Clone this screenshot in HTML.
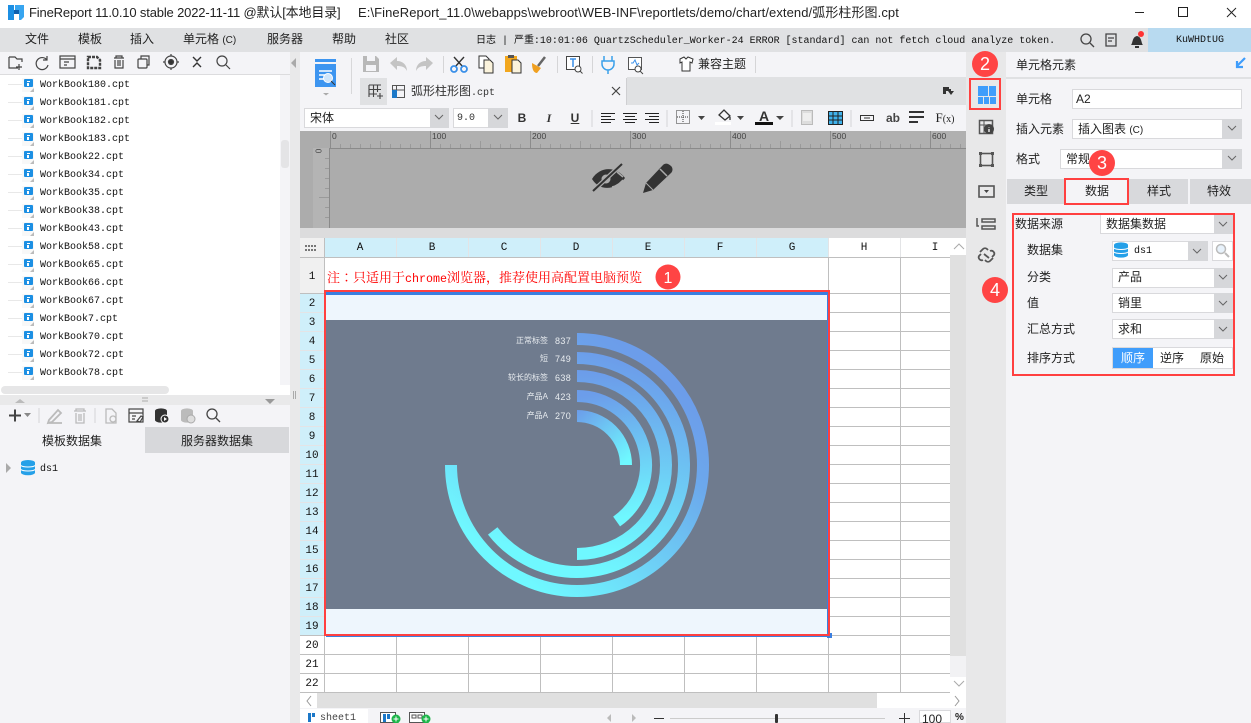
<!DOCTYPE html>
<html><head><meta charset="utf-8">
<style>
html,body{margin:0;padding:0;background:#f4f4f7;}
#p{position:relative;width:1251px;height:723px;overflow:hidden;background:#f4f4f7;font-family:"Liberation Sans","Noto Sans CJK SC",sans-serif;color:#222;font-size:12px;}
.r{position:absolute;}
.t{position:absolute;line-height:16px;white-space:nowrap;}
.m{font-family:"Liberation Mono","Noto Sans CJK SC",monospace;font-size:10px;color:#111;}
.c{transform:translateX(-50%);}
svg{position:absolute;left:0;top:0;}
.sel{position:absolute;background:#fff;border:1px solid #d9d9dc;box-sizing:border-box;}
.arr{position:absolute;background:#d6d7da;}
</style></head><body><div id="p">

<!-- backgrounds -->
<div class="r" style="left:0;top:0;width:1251px;height:28px;background:#fff"></div>
<div class="r" style="left:0;top:28px;width:1251px;height:24px;background:#e0e1e3"></div>
<div class="r" style="left:1148px;top:28px;width:103px;height:24px;background:#b8daf0"></div>
<div class="r" style="left:0;top:74px;width:290px;height:1px;background:#dcdcde"></div>
<div class="r" style="left:0;top:75px;width:280px;height:310px;background:#fff"></div>
<div class="r" style="left:281px;top:140px;width:8px;height:28px;background:#e4e4e6;border-radius:3px"></div>
<div class="r" style="left:0;top:385px;width:290px;height:10px;background:#fff"></div>
<div class="r" style="left:1px;top:386px;width:168px;height:8px;background:#e6e6e7;border-radius:4px"></div>
<div class="r" style="left:0;top:395px;width:290px;height:10px;background:#e9e9ea"></div>
<div class="r" style="left:145px;top:427px;width:144px;height:26px;background:#d7d8db"></div>
<div class="r" style="left:290px;top:52px;width:10px;height:671px;background:#e9e9ea"></div>

<div class="r" style="left:627px;top:77px;width:339px;height:28px;background:#e0e1e3"></div>
<div class="r" style="left:360px;top:78px;width:27px;height:27px;background:#e0e1e3"></div>
<div class="r" style="left:626px;top:78px;width:1px;height:27px;background:#cfcfd2"></div>
<div class="r" style="left:300px;top:131px;width:666px;height:97px;background:#acacac"></div>
<div class="r" style="left:300px;top:228px;width:666px;height:10px;background:#dcdcdd"></div>
<div class="r" style="left:966px;top:52px;width:40px;height:671px;background:#e8e8e9"></div>
<div class="r" style="left:1006px;top:77px;width:245px;height:2px;background:#e0e1e3"></div>

<!-- grid base -->
<div class="r" style="left:300px;top:238px;width:650px;height:454px;background:#fff"></div>
<div class="r" style="left:300px;top:238px;width:24px;height:55px;background:#f0f0f0"></div>
<div class="r" style="left:325px;top:238px;width:503px;height:19px;background:#cfeffa"></div>
<div class="r" style="left:300px;top:293px;width:24px;height:342px;background:#cfeffa"></div>

<svg width="1251" height="723" viewBox="0 0 1251 723">
<!-- grid lines -->
<g stroke="#bfbfbf" stroke-width="1" shape-rendering="crispEdges">
<path d="M324.5 238V692M828.5 238V692M900.5 238V692"/>
<path d="M300 257.5H950M300 293.5H950M300 312.5H950M300 331.5H950M300 350.5H950M300 369.5H950M300 388.5H950M300 407.5H950M300 426.5H950M300 445.5H950M300 464.5H950M300 483.5H950M300 502.5H950M300 521.5H950M300 540.5H950M300 559.5H950M300 578.5H950M300 597.5H950M300 616.5H950M300 635.5H950M300 654.5H950M300 673.5H950M300 692.5H950"/>
<path d="M396.5 635V692M468.5 635V692M540.5 635V692M612.5 635V692M684.5 635V692M756.5 635V692"/>
</g>
<g stroke="#e3e4e6" stroke-width="1" shape-rendering="crispEdges"><path d="M396.5 238V257M468.5 238V257M540.5 238V257M612.5 238V257M684.5 238V257M756.5 238V257M828.5 238V257M900.5 238V257"/></g>
<g stroke="#e4e4e6" stroke-width="1" shape-rendering="crispEdges"><path d="M300 312.5H324M300 331.5H324M300 350.5H324M300 369.5H324M300 388.5H324M300 407.5H324M300 426.5H324M300 445.5H324M300 464.5H324M300 483.5H324M300 502.5H324M300 521.5H324M300 540.5H324M300 559.5H324M300 578.5H324M300 597.5H324M300 616.5H324"/></g>
<!-- corner dots -->
<g fill="#777"><rect x="305" y="245" width="2" height="2"/><rect x="308" y="245" width="2" height="2"/><rect x="311" y="245" width="2" height="2"/><rect x="314" y="245" width="2" height="2"/><rect x="305" y="249" width="2" height="2"/><rect x="308" y="249" width="2" height="2"/><rect x="311" y="249" width="2" height="2"/><rect x="314" y="249" width="2" height="2"/></g>
<!-- chart cell -->
<rect x="326" y="295" width="502" height="339" fill="#eef6fd"/>
<rect x="326" y="320" width="502" height="289" fill="#6f7b8e"/>
<defs>
<linearGradient id="g1" gradientUnits="userSpaceOnUse" x1="690" y1="400" x2="540" y2="590"><stop offset="0" stop-color="#6c9dea"/><stop offset=".25" stop-color="#6ca8ec"/><stop offset="1" stop-color="#6ff8ff"/></linearGradient>
<linearGradient id="g2" gradientUnits="userSpaceOnUse" x1="650" y1="370" x2="590" y2="570"><stop offset="0" stop-color="#6c9dea"/><stop offset="1" stop-color="#6ff8ff"/></linearGradient>
<linearGradient id="g3" gradientUnits="userSpaceOnUse" x1="610" y1="375" x2="600" y2="550"><stop offset="0" stop-color="#6c9dea"/><stop offset="1" stop-color="#6ff8ff"/></linearGradient>
<linearGradient id="g4" gradientUnits="userSpaceOnUse" x1="590" y1="395" x2="610" y2="520"><stop offset="0" stop-color="#6c9dea"/><stop offset="1" stop-color="#6ff8ff"/></linearGradient>
<linearGradient id="g5" gradientUnits="userSpaceOnUse" x1="578" y1="410" x2="624" y2="463"><stop offset="0" stop-color="#6c9dea"/><stop offset="1" stop-color="#6ff8ff"/></linearGradient>
</defs>
<g fill="none" stroke-width="12">
<path d="M577 339A126 126 0 1 1 451 465" stroke="url(#g1)"/>
<path d="M577 358A107 107 0 1 1 492.7 530.9" stroke="url(#g2)"/>
<path d="M577 376A89 89 0 1 1 577 554" stroke="url(#g3)"/>
<path d="M577 396A69 69 0 0 1 616.6 521.5" stroke="url(#g4)"/>
<path d="M577 416A49 49 0 0 1 626 465" stroke="url(#g5)"/>
</g>
<!-- selection -->
<rect x="326" y="292" width="502" height="3" fill="#3a7fe0"/>
<rect x="827" y="293" width="1" height="342" fill="#3a7fe0"/>
<rect x="326" y="635" width="502" height="2" fill="#3a7fe0"/>
<rect x="827" y="633" width="5" height="5" fill="#3a7fe0"/>

<!-- title logo -->
<path d="M8 5h6v15H8z" fill="#1c8fe3"/><path d="M15 5h9v12l-3 3h-2v-9h-4z" fill="#37a5f0"/><path d="M14 10h5v4h-5z" fill="#0d5fae"/>
<!-- window buttons -->
<g fill="none" stroke="#222" stroke-width="1"><path d="M1135 12.5h9"/><rect x="1178.5" y="7.5" width="9" height="9"/><path d="M1227 8l9 9M1236 8l-9 9"/></g>
<!-- top-right icons -->
<g fill="none" stroke="#444" stroke-width="1.3"><circle cx="1086" cy="39" r="5"/><path d="M1090 43l4 4"/><path d="M1106 34h10v12h-10zM1108 38h6M1108 41h4"/></g>
<path d="M1131 45c2-2 1-8 6-9 5 1 4 7 6 9zM1135 46h4v2h-4z" fill="#333"/><circle cx="1141" cy="34" r="3" fill="#f33"/>

<!-- left toolbar -->
<g fill="none" stroke="#444" stroke-width="1.2">
<path d="M9 57h6l2 2h5v3M9 57v11h9M19 64v6M16 67h6"/>
<path d="M47 60a6 6 0 1 0 1 5M47 56v4h-4"/>
<rect x="60" y="56" width="15" height="12"/><path d="M60 59h15M64 62h5M64 65h3"/>
<path d="M88 57h9l3 3v8H88z" stroke-width="2.400" stroke-dasharray="3 1"/>
<path d="M114 58h10M116 58v-2h6v2M115 60v8h8v-8M118 60v6M120 60v6"/>
<rect x="138" y="59" width="9" height="9" rx="1"/><path d="M141 59v-3h8v9h-2"/>
<circle cx="171" cy="62" r="6"/><circle cx="171" cy="62" r="2.5" fill="#333"/><path d="M171 54v2M171 68v2M163 62h2M177 62h2"/>
<path d="M193 57l4 4 4-4M193 67l4-4 4 4" stroke="#333" stroke-width="1.4"/>
<circle cx="222" cy="61" r="5"/><path d="M226 65l4 4"/>
</g>
<!-- tree & file icons -->
<g stroke="#e8e8e8"><path d="M8 84.5h14M8 102.5h14M8 120.5h14M8 138.5h14M8 156.5h14M8 174.5h14M8 192.5h14M8 210.5h14M8 228.5h14M8 246.5h14M8 264.5h14M8 282.5h14M8 300.5h14M8 318.5h14M8 336.5h14M8 354.5h14M8 372.5h14"/></g>
<defs><g id="f"><rect x="0" y="0" width="12" height="14" fill="#f8f8f8"/><rect x="2" y="1" width="9" height="8" rx="1" fill="#1c8fe3"/><rect x="5" y="3" width="3" height="1" fill="#fff"/><rect x="5" y="5" width="2" height="3" fill="#fff"/><path d="M12 10v4h-4z" fill="#bbb"/></g></defs>
<use href="#f" x="22" y="78"/><use href="#f" x="22" y="96"/><use href="#f" x="22" y="114"/><use href="#f" x="22" y="132"/><use href="#f" x="22" y="150"/><use href="#f" x="22" y="168"/><use href="#f" x="22" y="186"/><use href="#f" x="22" y="204"/><use href="#f" x="22" y="222"/><use href="#f" x="22" y="240"/><use href="#f" x="22" y="258"/><use href="#f" x="22" y="276"/><use href="#f" x="22" y="294"/><use href="#f" x="22" y="312"/><use href="#f" x="22" y="330"/><use href="#f" x="22" y="348"/><use href="#f" x="22" y="366"/>
<!-- splitter arrows -->
<path d="M15 403l5-4 5 4z" fill="#bbb"/><path d="M265 399h10l-5 5z" fill="#999"/><path d="M142 398h6M142 401h6" stroke="#aaa"/>
<path d="M296 58l-5 5 5 5z" fill="#aaa"/><path d="M293.500 391v8M295.500 391v8" stroke="#aaa"/>
<!-- data toolbar -->
<path d="M9 415.5h12M15 409.5v12" stroke="#444" stroke-width="2"/><path d="M24 413h7l-3.500 4z" fill="#888"/>
<path d="M39 408v15M95 408v15" stroke="#d5d5d7"/>
<g fill="none" stroke="#bbb" stroke-width="1.3"><path d="M49 420l9-10 3 3-9 9-4 1zM48 423h14" stroke-width="1.8"/><path d="M74 411h12M76 411v-2h8v2M76 413v10h8v-10M79 414v7M81 414v7"/><path d="M106 409h6l4 4v10h-10z"/><circle cx="113" cy="419" r="3"/></g>
<g fill="none" stroke="#444" stroke-width="1.2"><rect x="129" y="409" width="14" height="13"/><path d="M129 413h14M132 416h4M132 419h3M137 421l4-5 2 1-3 5z"/></g>
<ellipse cx="161" cy="411" rx="6" ry="2.600" fill="#333"/><rect x="155" y="411" width="12" height="9" fill="#333"/><ellipse cx="161" cy="420" rx="6" ry="2.600" fill="#333"/><circle cx="165" cy="419" r="4" fill="#333" stroke="#fff"/><path d="M164 417l3 2-3 2z" fill="#fff"/>
<ellipse cx="187" cy="411" rx="6" ry="2.600" fill="#bbb"/><rect x="181" y="411" width="12" height="9" fill="#bbb"/><ellipse cx="187" cy="420" rx="6" ry="2.600" fill="#bbb"/><circle cx="191" cy="419" r="4" fill="#ddd" stroke="#aaa"/>
<g fill="none" stroke="#444" stroke-width="1.3"><circle cx="212" cy="414" r="5"/><path d="M216 418l4 4"/></g>
<!-- ds1 -->
<path d="M6 463l5 5-5 5z" fill="#aaa"/>
<defs><g id="d"><ellipse cx="7" cy="2.600" rx="7" ry="2.600" fill="#25a0e8"/><rect x="0" y="2.600" width="14" height="10" fill="#25a0e8"/><ellipse cx="7" cy="12.600" rx="7" ry="2.600" fill="#25a0e8"/><path d="M0 5.500c2 2 12 2 14 0M0 9.500c2 2 12 2 14 0" stroke="#fff" fill="none"/></g></defs>
<use href="#d" x="21" y="460"/>

<!-- big preview icon -->
<rect x="315" y="59" width="21" height="3" fill="#3d95f0"/>
<path d="M315 64h21v23h-21z" fill="#3d95f0"/><path d="M319 71h13M319 75h6M319 79h5" stroke="#fff" stroke-width="1.400"/><circle cx="328" cy="78" r="4.500" fill="#cfe5fb" stroke="#fff"/><path d="M331 81l4 4" stroke="#333"/>
<path d="M323 93h6l-3 2.500z" fill="#aaa"/>
<path d="M351.500 58v36" stroke="#d8d8da"/>
<!-- top toolbar -->
<path d="M363 56h13l3 3v13h-16z" fill="#b8b8b8"/><rect x="367" y="56" width="8" height="5" fill="#f4f4f7"/><rect x="366" y="65" width="10" height="6" fill="#f4f4f7"/>
<path d="M390 63l7-6v4c6 0 10 4 10 10-2-4-5-5-10-5v4z" fill="#c4c4c4"/>
<path d="M433 63l-7-6v4c-6 0-10 4-10 10 2-4 5-5 10-5v4z" fill="#c4c4c4"/>
<path d="M443.500 56v17M557.500 56v17M592.500 56v17M755.500 56v17" stroke="#d5d5d7"/>
<g fill="none" stroke="#333" stroke-width="1.4"><path d="M454 57l9 10M464 57l-9 10"/></g><g fill="none" stroke="#3a8fe8" stroke-width="1.800"><circle cx="454" cy="69" r="3"/><circle cx="464" cy="69" r="3"/></g>
<g stroke="#333" stroke-width="1"><path d="M479 56h7l3 3v9h-10z" fill="#fff"/><path d="M484 60h6l3 3v10h-9z" fill="#fbf3dc"/></g>
<path d="M505 56h12v16h-12z" fill="#f2a71e"/><rect x="508" y="55" width="6" height="3" fill="#555"/><path d="M512 60h6l3 3v10h-9z" fill="#fbf3dc" stroke="#333"/>
<path d="M532 63l9 5-4 5c-3 0-5-3-5-10z" fill="#f0a020"/><path d="M538 66l7-9" stroke="#666" stroke-width="2.500"/>
<rect x="566.500" y="56.500" width="13" height="13" fill="#fff" stroke="#444"/><path d="M570 59h6M573 59v8" stroke="#3a8fe8" stroke-width="1.500" fill="none"/><circle cx="578" cy="69" r="3" fill="#fff" stroke="#444"/><path d="M580 71l2.500 2.500" stroke="#444"/>
<path d="M604 56v5M612 56v5M602 61h12v3a6 6 0 0 1-12 0zM608 70v4" stroke="#3aa0ea" stroke-width="1.500" fill="none"/>
<rect x="628.500" y="57.500" width="13" height="12" fill="#fff" stroke="#555"/><path d="M631 63h2l2-3 2 5 2-2" stroke="#3a8fe8" fill="none"/><circle cx="638" cy="69" r="3" fill="#fff" stroke="#444"/><path d="M640 71l3 3" stroke="#444"/>
<path d="M680 59l4-2 2 2 2-2 5 2-1 4-2-1v9h-8v-9l-2 1z" fill="#fff" stroke="#333"/>
<!-- tab -->
<g fill="none" stroke="#444" stroke-width="1.100"><path d="M369 85h12M369 89.500h12M369 94h8M369 85v12M373.500 85v12M377.500 85v7M380 93v6M377 96h6"/></g>
<rect x="392.500" y="85.500" width="12" height="12" fill="none" stroke="#555"/><path d="M396.500 85v13M392 90h13" stroke="#555"/><path d="M392 90h5v8h-5z" fill="#1c78c8"/><path d="M612 87l8 8M620 87l-8 8" stroke="#444" stroke-width="1.200"/>
<path d="M943 87h6v2h2v2h-5v3h-3zM948 91h6l-3 4z" fill="#333"/>
<!-- format toolbar -->
<path d="M592 110v17M667 110v17M792 110v17M851 110v17" stroke="#d5d5d7" />
<g stroke="#222" stroke-width="1"><path d="M601 113.500h14M601 116.500h10M601 119.500h14M601 122.500h10"/><path d="M623 113.500h14M625 116.500h10M623 119.500h14M625 122.500h10"/><path d="M645 113.500h14M649 116.500h10M645 119.500h14M649 122.500h10"/></g>
<rect x="676.500" y="110.500" width="13" height="13" fill="none" stroke="#333" stroke-dasharray="1 1"/><path d="M683 111v12M677 117h12" stroke="#333" stroke-dasharray="1 1"/>
<path d="M698 116h7l-3.500 4z" fill="#444"/>
<path d="M719 115l5-5 6 6-5 4zM730 117v3" fill="none" stroke="#333" stroke-width="1.300"/><rect x="715" y="122" width="16" height="3" fill="#fff"/>
<path d="M737 116h7l-3.500 4z" fill="#444"/>
<rect x="755" y="122" width="18" height="3" fill="#111"/>
<path d="M776 116h8l-4 4z" fill="#444"/>
<rect x="801.500" y="110.500" width="11" height="14" fill="#ddd" stroke="#bbb"/><rect x="803" y="113" width="8" height="8" fill="#eee"/>
<rect x="828.500" y="111.500" width="14" height="13" fill="#3fb2ec" stroke="#222"/><path d="M828 116h15M828 120h15M833 111v14M838 111v14" stroke="#222"/>
<rect x="860.500" y="115.500" width="13" height="5" fill="none" stroke="#333"/><path d="M864 118h6" stroke="#333"/>
<path d="M909 112h15M909 117h15M909 122h9" stroke="#333" stroke-width="2"/>
<!-- ruler -->
<rect x="330" y="148" width="636" height="1" fill="#8a8a8a"/><rect x="313" y="148" width="17" height="80" fill="#b4b4b4"/><rect x="330" y="131" width="636" height="17" fill="#b0b0b0"/>
<path d="M330.500 131v17M430.500 131v17M530.500 131v17M630.500 131v17M730.500 131v17M830.500 131v17M930.500 131v17" stroke="#8c8c8c" stroke-width="1"/>
<path d="M340.500 144v4M350.500 144v4M360.500 144v4M370.500 144v4M380.500 141v7M390.500 144v4M400.500 144v4M410.500 144v4M420.500 144v4M440.500 144v4M450.500 144v4M460.500 144v4M470.500 144v4M480.500 141v7M490.500 144v4M500.500 144v4M510.500 144v4M520.500 144v4M540.500 144v4M550.500 144v4M560.500 144v4M570.500 144v4M580.500 141v7M590.500 144v4M600.500 144v4M610.500 144v4M620.500 144v4M640.500 144v4M650.500 144v4M660.500 144v4M670.500 144v4M680.500 141v7M690.500 144v4M700.500 144v4M710.500 144v4M720.500 144v4M740.500 144v4M750.500 144v4M760.500 144v4M770.500 144v4M780.500 141v7M790.500 144v4M800.500 144v4M810.500 144v4M820.500 144v4M840.500 144v4M850.500 144v4M860.500 144v4M870.500 144v4M880.500 141v7M890.500 144v4M900.500 144v4M910.500 144v4M920.500 144v4M940.500 144v4M950.500 144v4M960.500 144v4" stroke="#9a9a9a"/>
<path d="M325 158.500h4M325 168.500h4M325 178.500h4M319 197.500h10M325 207.500h4M325 217.500h4M325 188.500h4" stroke="#9a9a9a" shape-rendering="crispEdges"/>
<path d="M329.500 148v80" stroke="#8a8a8a"/>
<!-- eye, pencil -->
<path d="M592 179C600 166 616 166 625 178C616 190 600 192 592 179z" fill="#333"/><circle cx="606" cy="179" r="4.500" fill="#acacac"/><path d="M617 172L623 177M612 187C617 186 620 183 623 180" stroke="#acacac" fill="none" stroke-width="1.500"/><path d="M592 192l31-29" stroke="#acacac" stroke-width="4.500"/><path d="M593 191l29-27" stroke="#333" stroke-width="2"/>
<path d="M643 193l3-10 17-18c2-2 5-2 8 1 2 2 2 5 0 7l-18 17z" fill="#333"/><path d="M660 169l7 7" stroke="#acacac" stroke-width="1.500"/><path d="M646 183l7 7" stroke="#acacac" stroke-width="1"/>

<!-- scrollbar v -->
<rect x="950" y="238" width="16" height="17" fill="#fff"/><path d="M954 249l5-5 5 5" stroke="#aaa" fill="none"/>
<rect x="950" y="255" width="16" height="401" fill="#e0e0e0"/>
<rect x="950" y="656" width="16" height="21" fill="#f2f2f4"/>
<rect x="950" y="677" width="16" height="16" fill="#fff"/><path d="M954 681l5 5 5-5" stroke="#aaa" fill="none"/>
<!-- scrollbar h -->
<rect x="300" y="693" width="666" height="15" fill="#fff"/>
<rect x="317" y="693" width="560" height="15" fill="#e0e0e0"/>
<path d="M311 696l-4 5 4 5M955 696l4 5-4 5" fill="none" stroke="#999"/>
<!-- status -->
<rect x="300" y="708" width="666" height="15" fill="#f4f4f7"/>
<rect x="300" y="709" width="68" height="14" fill="#fff"/>
<path d="M308 713h3v9h-3z" fill="#1c78c8"/><path d="M312 713h3v4h-3z" fill="#1c78c8"/>
<rect x="380.500" y="712.500" width="15" height="10" fill="#fff" stroke="#555"/><path d="M383 714h3v8h-3zM387 714h3v5h-3z" fill="#1c78c8"/><circle cx="396" cy="719" r="4.500" fill="#1eb64a"/><path d="M393.500 719h5M396 716.500v5" stroke="#fff"/>
<rect x="409.500" y="712.500" width="15" height="10" fill="#fff" stroke="#555"/><path d="M412 715h4v3h-4zM418 715h4v3h-4z" fill="none" stroke="#555"/><circle cx="426" cy="719" r="4.500" fill="#1eb64a"/><path d="M423.500 719h5M426 716.500v5" stroke="#fff"/>
<path d="M611 714l-4 4 4 4zM632 714l4 4-4 4z" fill="#bbb"/>
<path d="M654 718.500h10M899 718.500h11M904.500 713v11" stroke="#333"/>
<path d="M670 718.500h215" stroke="#ccc"/><rect x="775" y="714" width="3" height="9" rx="1" fill="#333"/>

<!-- right sidebar icons -->
<rect x="978" y="86" width="10" height="10" fill="#3f9dfb"/><rect x="989" y="86" width="7" height="10" fill="#3f9dfb"/><rect x="978" y="97" width="5" height="7" fill="#3f9dfb"/><rect x="984" y="97" width="5" height="7" fill="#3f9dfb"/><rect x="990" y="97" width="6" height="7" fill="#3f9dfb"/>
<rect x="979.500" y="120.500" width="13" height="13" fill="none" stroke="#555" stroke-width="1.500"/><path d="M979 125h14M984 120v14" stroke="#555"/><circle cx="989" cy="129" r="5" fill="#444"/><path d="M989 127v.5M989 129v3" stroke="#fff" stroke-width="1.300"/>
<rect x="980.500" y="153.500" width="12" height="12" fill="none" stroke="#555" stroke-width="1.600"/><g fill="#555"><rect x="979" y="152" width="3" height="3"/><rect x="991" y="152" width="3" height="3"/><rect x="979" y="164" width="3" height="3"/><rect x="991" y="164" width="3" height="3"/></g>
<rect x="979" y="186" width="15" height="11" fill="none" stroke="#555" stroke-width="1.600"/><path d="M984 190h5l-2.500 3z" fill="#444"/>
<path d="M977 218v8h2M982 219h13v3h-13zM982 226h13v3h-13z" fill="none" stroke="#555" stroke-width="1.500"/>
<path d="M980 252l3-3a3 3 0 0 1 4 0l1 1M993 258l-3 3a3 3 0 0 1-4 0l-1-1M984 254l5 4M990 251a3 3 0 0 1 4 4l-2 2M983 260a3 3 0 0 1-4-4l2-2" fill="none" stroke="#555" stroke-width="1.800"/>
<path d="M1245 58l-8 8M1237 61v6h6" stroke="#3f9dfb" stroke-width="2.200" fill="none"/>
</svg>

<!-- Title text -->
<div class="t" style="left:29px;top:5px;font-size:13px;letter-spacing:-.16px">FineReport 11.0.10 stable 2022-11-11 @默认[本地目录]</div>
<div class="t" style="left:358px;top:5px;font-size:13px;letter-spacing:.08px">E:\FineReport_11.0\webapps\webroot\WEB-INF\reportlets/demo/chart/extend/弧形柱形图.cpt</div>
<!-- Menu -->
<div class="t" style="left:25px;top:31px">文件</div><div class="t" style="left:78px;top:31px">模板</div><div class="t" style="left:130px;top:31px">插入</div><div class="t" style="left:183px;top:31px">单元格 <span style="font-size:10px">(C)</span></div><div class="t" style="left:267px;top:31px">服务器</div><div class="t" style="left:332px;top:31px">帮助</div><div class="t" style="left:385px;top:31px">社区</div>
<div class="t m" style="left:476px;top:34px;letter-spacing:-.01px">日志 | 严重:10:01:06 QuartzScheduler_Worker-24 ERROR [standard] can not fetch cloud analyze token.</div>
<div class="t m" style="left:1175px;top:33px;width:50px;text-align:center">KuWHDtUG</div>

<!-- File list -->
<div class="t m" style="left:40px;top:78px">WorkBook180.cpt</div>
<div class="t m" style="left:40px;top:96px">WorkBook181.cpt</div>
<div class="t m" style="left:40px;top:114px">WorkBook182.cpt</div>
<div class="t m" style="left:40px;top:132px">WorkBook183.cpt</div>
<div class="t m" style="left:40px;top:150px">WorkBook22.cpt</div>
<div class="t m" style="left:40px;top:168px">WorkBook34.cpt</div>
<div class="t m" style="left:40px;top:186px">WorkBook35.cpt</div>
<div class="t m" style="left:40px;top:204px">WorkBook38.cpt</div>
<div class="t m" style="left:40px;top:222px">WorkBook43.cpt</div>
<div class="t m" style="left:40px;top:240px">WorkBook58.cpt</div>
<div class="t m" style="left:40px;top:258px">WorkBook65.cpt</div>
<div class="t m" style="left:40px;top:276px">WorkBook66.cpt</div>
<div class="t m" style="left:40px;top:294px">WorkBook67.cpt</div>
<div class="t m" style="left:40px;top:312px">WorkBook7.cpt</div>
<div class="t m" style="left:40px;top:330px">WorkBook70.cpt</div>
<div class="t m" style="left:40px;top:348px">WorkBook72.cpt</div>
<div class="t m" style="left:40px;top:366px">WorkBook78.cpt</div>

<div class="t" style="left:42px;top:433px">模板数据集</div>
<div class="t" style="left:181px;top:433px">服务器数据集</div>
<div class="t m" style="left:40px;top:462px">ds1</div>

<!-- Center toolbar -->
<div class="t" style="left:698px;top:56px">兼容主题</div>
<div class="t" style="left:411px;top:84px;font-family:'Liberation Mono','Noto Sans CJK SC',monospace;font-size:12px;color:#333">弧形柱形图<span style="font-size:10px">.cpt</span></div>

<div class="sel" style="left:304px;top:108px;width:145px;height:20px;"></div><div class="arr" style="left:430px;top:108px;width:19px;height:20px"></div>
<div class="t" style="left:310px;top:110px">宋体</div>
<div class="sel" style="left:453px;top:108px;width:55px;height:20px;"></div><div class="arr" style="left:488px;top:108px;width:20px;height:20px"></div>
<div class="t m" style="left:457px;top:111px;color:#333">9.0</div>
<svg width="1251" height="723" style="pointer-events:none"><path d="M435 115l4 4 4-4M494 115l4 4 4-4" fill="none" stroke="#666"/></svg>
<div class="t c" style="left:522px;top:110px;font-weight:bold;color:#333">B</div>
<div class="t c" style="left:549px;top:110px;font-weight:bold;font-style:italic;color:#333;font-family:'Liberation Serif'">I</div>
<div class="t c" style="left:575px;top:110px;font-weight:bold;color:#333;text-decoration:underline">U</div>
<div class="t c" style="left:764px;top:108px;font-weight:bold;font-size:14px;color:#333">A</div>
<div class="t c" style="left:893px;top:110px;font-weight:bold;color:#444;font-size:12px">ab</div>
<div class="t c" style="left:945px;top:110px;font-family:'Liberation Serif';font-size:13px;color:#222">F<span style="font-size:10px">(x)</span></div>

<!-- Ruler numbers -->
<div class="t" style="left:332px;top:130px;font-size:8.500px;color:#444;line-height:12px">0</div>
<div class="t" style="left:432px;top:130px;font-size:8.500px;color:#444;line-height:12px">100</div>
<div class="t" style="left:532px;top:130px;font-size:8.500px;color:#444;line-height:12px">200</div>
<div class="t" style="left:632px;top:130px;font-size:8.500px;color:#444;line-height:12px">300</div>
<div class="t" style="left:732px;top:130px;font-size:8.500px;color:#444;line-height:12px">400</div>
<div class="t" style="left:832px;top:130px;font-size:8.500px;color:#444;line-height:12px">500</div>
<div class="t" style="left:932px;top:130px;font-size:8.500px;color:#444;line-height:12px">600</div>
<div class="t" style="left:316px;top:145px;font-size:8.500px;color:#444;line-height:12px;transform:rotate(90deg)">0</div>

<!-- Column heads -->
<div class="t m c" style="left:360px;top:240px;font-size:11px">A</div>
<div class="t m c" style="left:432px;top:240px;font-size:11px">B</div>
<div class="t m c" style="left:504px;top:240px;font-size:11px">C</div>
<div class="t m c" style="left:576px;top:240px;font-size:11px">D</div>
<div class="t m c" style="left:648px;top:240px;font-size:11px">E</div>
<div class="t m c" style="left:720px;top:240px;font-size:11px">F</div>
<div class="t m c" style="left:792px;top:240px;font-size:11px">G</div>
<div class="t m c" style="left:864px;top:240px;font-size:11px">H</div>
<div class="t m c" style="left:935px;top:240px;font-size:11px">I</div>
<!-- Row heads -->
<div class="t m c" style="left:312px;top:269px;font-size:11px">1</div>
<div class="t m c" style="left:312px;top:296px;font-size:11px">2</div>
<div class="t m c" style="left:312px;top:315px;font-size:11px">3</div>
<div class="t m c" style="left:312px;top:334px;font-size:11px">4</div>
<div class="t m c" style="left:312px;top:353px;font-size:11px">5</div>
<div class="t m c" style="left:312px;top:372px;font-size:11px">6</div>
<div class="t m c" style="left:312px;top:391px;font-size:11px">7</div>
<div class="t m c" style="left:312px;top:410px;font-size:11px">8</div>
<div class="t m c" style="left:312px;top:429px;font-size:11px">9</div>
<div class="t m c" style="left:312px;top:448px;font-size:11px">10</div>
<div class="t m c" style="left:312px;top:467px;font-size:11px">11</div>
<div class="t m c" style="left:312px;top:486px;font-size:11px">12</div>
<div class="t m c" style="left:312px;top:505px;font-size:11px">13</div>
<div class="t m c" style="left:312px;top:524px;font-size:11px">14</div>
<div class="t m c" style="left:312px;top:543px;font-size:11px">15</div>
<div class="t m c" style="left:312px;top:562px;font-size:11px">16</div>
<div class="t m c" style="left:312px;top:581px;font-size:11px">17</div>
<div class="t m c" style="left:312px;top:600px;font-size:11px">18</div>
<div class="t m c" style="left:312px;top:619px;font-size:11px">19</div>
<div class="t m c" style="left:312px;top:638px;font-size:11px">20</div>
<div class="t m c" style="left:312px;top:657px;font-size:11px">21</div>
<div class="t m c" style="left:312px;top:676px;font-size:11px">22</div>

<!-- red note -->
<div class="t" style="left:327px;top:269px;color:#f00;font-size:13px;font-family:'Liberation Mono','Noto Serif CJK SC',serif">注<span style="font-family:'Noto Serif CJK TC',serif">：</span>只适用于<span style="font-size:11.670px">chrome</span>浏览器，推荐使用高配置电脑预览</div>

<!-- chart labels -->
<div class="t" style="right:703px;top:333px;font-size:8px;color:#e8ecf0">正常标签</div><div class="t" style="left:555px;top:333px;font-size:9px;color:#e8ecf0;letter-spacing:.4px">837</div>
<div class="t" style="right:703px;top:351px;font-size:8px;color:#e8ecf0">短</div><div class="t" style="left:555px;top:351px;font-size:9px;color:#e8ecf0;letter-spacing:.4px">749</div>
<div class="t" style="right:703px;top:370px;font-size:8px;color:#e8ecf0">较长的标签</div><div class="t" style="left:555px;top:370px;font-size:9px;color:#e8ecf0;letter-spacing:.4px">638</div>
<div class="t" style="right:703px;top:389px;font-size:8px;color:#e8ecf0">产品A</div><div class="t" style="left:555px;top:389px;font-size:9px;color:#e8ecf0;letter-spacing:.4px">423</div>
<div class="t" style="right:703px;top:408px;font-size:8px;color:#e8ecf0">产品A</div><div class="t" style="left:555px;top:408px;font-size:9px;color:#e8ecf0;letter-spacing:.4px">270</div>

<!-- status text -->
<div class="t m" style="left:320px;top:711px;color:#444">sheet1</div>
<div class="sel" style="left:919px;top:710px;width:32px;height:13px;"></div>
<div class="t" style="left:922px;top:711px;color:#222">100</div>
<div class="t" style="left:955px;top:710px;font-size:10px;font-weight:bold;color:#222">%</div>

<!-- Right panel -->
<div class="t" style="left:1016px;top:57px">单元格元素</div>
<div class="t" style="left:1016px;top:91px">单元格</div>
<div class="sel" style="left:1072px;top:89px;width:170px;height:20px;"></div>
<div class="t" style="left:1076px;top:91px;color:#222">A2</div>
<div class="t" style="left:1016px;top:121px">插入元素</div>
<div class="sel" style="left:1072px;top:119px;width:170px;height:20px;"></div><div class="arr" style="left:1222px;top:119px;width:20px;height:20px"></div>
<div class="t" style="left:1078px;top:121px">插入图表 <span style="font-size:10px">(C)</span></div>
<div class="t" style="left:1016px;top:151px">格式</div>
<div class="sel" style="left:1060px;top:149px;width:182px;height:20px;"></div><div class="arr" style="left:1222px;top:149px;width:20px;height:20px"></div>
<div class="t" style="left:1066px;top:151px">常规</div>

<div class="r" style="left:1007px;top:179px;width:57px;height:25px;background:#d8d9dc"></div>
<div class="r" style="left:1129px;top:179px;width:59px;height:25px;background:#d8d9dc"></div>
<div class="r" style="left:1190px;top:179px;width:61px;height:25px;background:#d8d9dc"></div>
<div class="t c" style="left:1036px;top:183px">类型</div>
<div class="t c" style="left:1097px;top:183px">数据</div>
<div class="t c" style="left:1159px;top:183px">样式</div>
<div class="t c" style="left:1219px;top:183px">特效</div>

<div class="t" style="left:1015px;top:216px">数据来源</div>
<div class="sel" style="left:1100px;top:214px;width:133px;height:20px;"></div><div class="arr" style="left:1214px;top:214px;width:19px;height:20px"></div>
<div class="t" style="left:1106px;top:216px">数据集数据</div>

<div class="t" style="left:1027px;top:242px">数据集</div>
<div class="sel" style="left:1112px;top:241px;width:96px;height:20px;"></div><div class="arr" style="left:1188px;top:241px;width:20px;height:20px"></div>
<div class="t m" style="left:1134px;top:244px">ds1</div>
<div class="sel" style="left:1212px;top:241px;width:21px;height:20px;"></div>

<div class="t" style="left:1027px;top:269px">分类</div>
<div class="sel" style="left:1112px;top:268px;width:121px;height:20px;"></div><div class="arr" style="left:1214px;top:268px;width:19px;height:20px"></div>
<div class="t" style="left:1118px;top:269px">产品</div>

<div class="t" style="left:1027px;top:295px">值</div>
<div class="sel" style="left:1112px;top:293px;width:121px;height:20px;"></div><div class="arr" style="left:1214px;top:293px;width:19px;height:20px"></div>
<div class="t" style="left:1118px;top:295px">销里</div>

<div class="t" style="left:1027px;top:321px">汇总方式</div>
<div class="sel" style="left:1112px;top:319px;width:121px;height:20px;"></div><div class="arr" style="left:1214px;top:319px;width:19px;height:20px"></div>
<div class="t" style="left:1118px;top:321px">求和</div>

<div class="t" style="left:1027px;top:350px">排序方式</div>
<div class="sel" style="left:1112px;top:347px;width:121px;height:22px;"></div>
<div class="r" style="left:1113px;top:348px;width:40px;height:20px;background:#3f9dfb"></div>
<div class="t c" style="left:1133px;top:350px;color:#fff">顺序</div>
<div class="t c" style="left:1172px;top:350px">逆序</div>
<div class="t c" style="left:1212px;top:350px">原始</div>

<svg width="1251" height="723" style="pointer-events:none">
<g fill="none" stroke="#666"><path d="M1228 126l4 4 4-4M1228 156l4 4 4-4M1219 222l4 4 4-4M1193 249l4 4 4-4M1219 275l4 4 4-4M1219 301l4 4 4-4M1219 327l4 4 4-4"/></g>
<ellipse cx="1121" cy="245" rx="7" ry="2.600" fill="#25a0e8"/><rect x="1114" y="245" width="14" height="10" fill="#25a0e8"/><ellipse cx="1121" cy="255" rx="7" ry="2.600" fill="#25a0e8"/><path d="M1114 248c2 2 12 2 14 0M1114 252c2 2 12 2 14 0" stroke="#fff" fill="none"/>
<circle cx="1221" cy="249" r="4.500" fill="#e8f2fb" stroke="#bbb" stroke-width="1.500"/><path d="M1225 253l4 4" stroke="#bbb" stroke-width="2"/>
<!-- red frames -->
<g fill="none" stroke="#ff4040" stroke-width="2">
<rect x="325" y="291" width="504" height="344"/>
<rect x="970" y="79" width="30" height="30"/>
<rect x="1065" y="179" width="63" height="25"/>
<rect x="1013" y="214" width="221" height="161"/>
</g>
<g fill="#ff4444"><circle cx="668" cy="277" r="12.500"/><circle cx="985" cy="64" r="13"/><circle cx="1102" cy="163" r="13"/><circle cx="995" cy="290" r="13"/></g>
<g fill="#fff" font-family="Liberation Sans,sans-serif" font-size="18" text-anchor="middle">
<text x="668" y="283" font-size="16">1</text><text x="985" y="70">2</text><text x="1102" y="169">3</text><text x="995" y="296">4</text></g>
</svg>
</div></body></html>
